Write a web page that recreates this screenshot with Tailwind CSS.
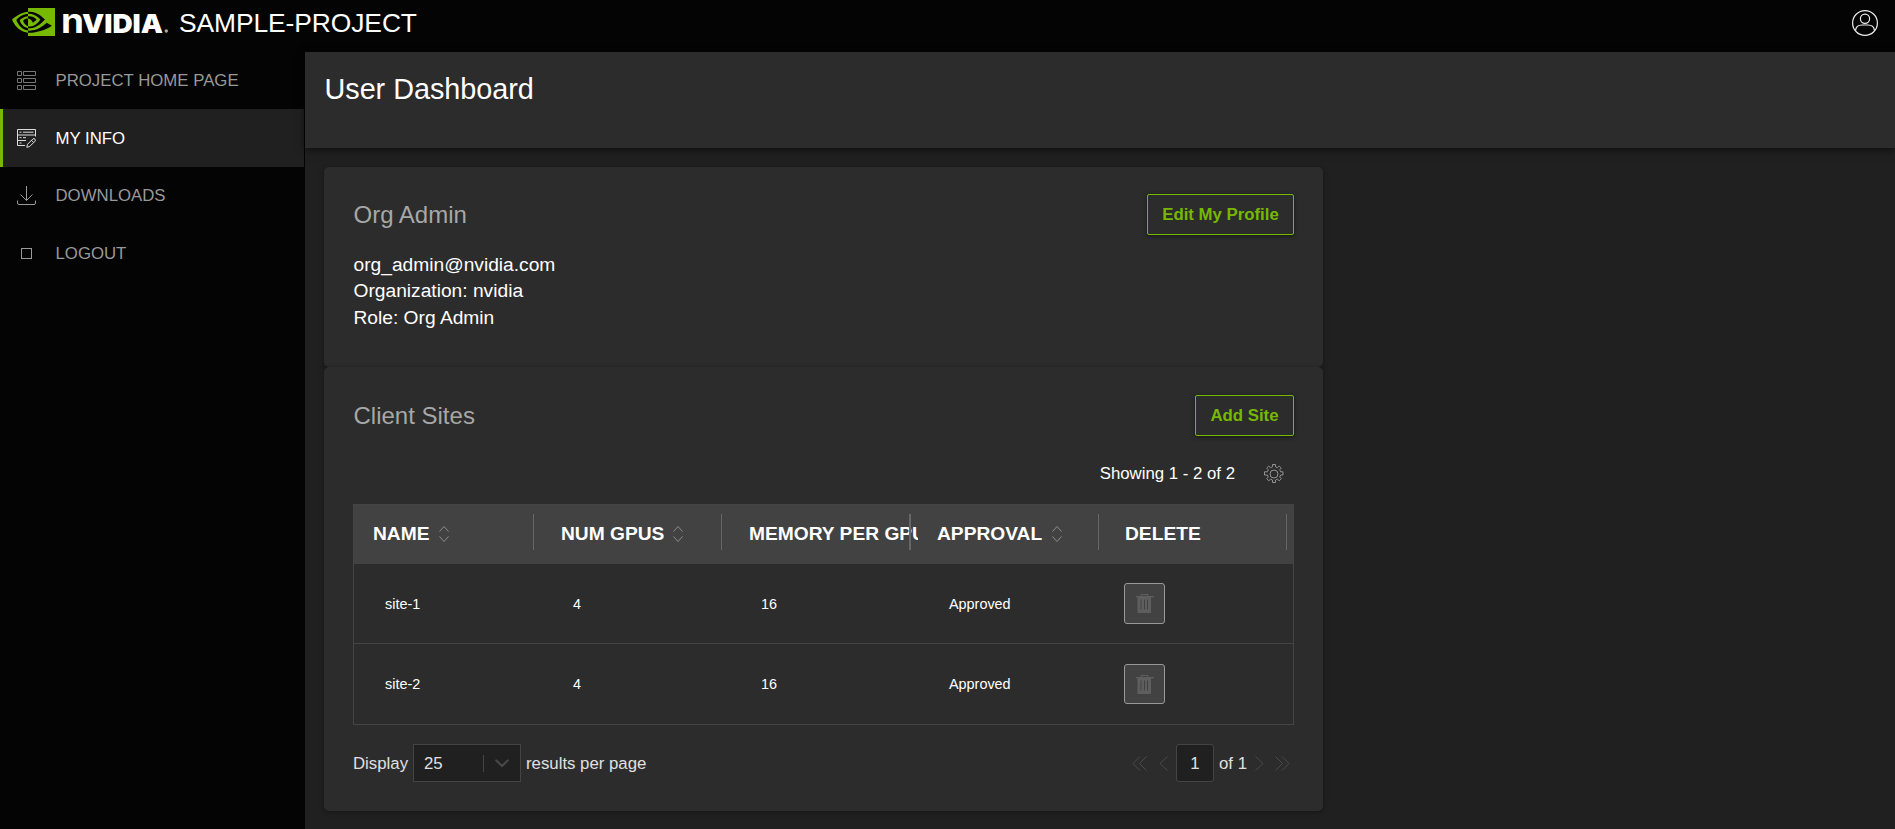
<!DOCTYPE html>
<html lang="en">
<head>
<meta charset="utf-8">
<title>User Dashboard</title>
<script src="https://cdn.jsdelivr.net/npm/@tailwindcss/browser@4"></script>
</head>
<body class="bg-[#202020] text-white font-['Liberation_Sans',Arial,sans-serif] overflow-hidden">
<div class="flex h-[829px] w-full flex-col">
  <header class="flex h-[52px] shrink-0 items-start justify-between bg-[#040404] pl-3 pr-[17px]">
    <div class="flex items-start">
      <svg class="mt-2 h-7 w-[43px]" viewBox="0 4.063 24 15.874" preserveAspectRatio="none">
        <path fill="#76b900" d="M8.948 8.798v-1.43a6.7 6.7 0 0 1 .424-.018c3.922-.124 6.493 3.374 6.493 3.374s-2.774 3.851-5.75 3.851c-.398 0-.787-.062-1.158-.185v-4.346c1.528.185 1.837.857 2.747 2.385l2.04-1.714s-1.492-1.952-4-1.952a6.016 6.016 0 0 0-.796.035m0-4.735v2.138l.424-.027c5.45-.185 9.01 4.47 9.01 4.47s-4.08 4.964-8.33 4.964c-.37 0-.733-.035-1.095-.097v1.325c.3.035.61.062.91.062 3.957 0 6.82-2.023 9.593-4.408.459.371 2.34 1.263 2.73 1.652-2.633 2.208-8.772 3.984-12.253 3.984-.335 0-.653-.018-.971-.053v1.864H24V4.063zm0 10.326v1.131c-3.657-.654-4.673-4.46-4.673-4.46s1.758-1.944 4.673-2.262v1.237H8.94c-1.528-.186-2.73 1.245-2.73 1.245s.68 2.412 2.739 3.11M2.456 10.9s2.164-3.197 6.5-3.533V6.201C4.153 6.59 0 10.653 0 10.653s2.35 6.802 8.948 7.42v-1.237c-4.84-.6-6.492-5.936-6.492-5.936z"/>
      </svg>
      <svg class="ml-px mt-2 h-8 w-[114px] overflow-visible" viewBox="0 0 114 32" fill="#fff" font-family="Inter" font-weight="900">
        <text x="5" y="24.500" font-size="33.500" font-weight="700" textLength="23" lengthAdjust="spacingAndGlyphs">n</text>
        <text x="26" y="24.500" font-size="26" textLength="81" lengthAdjust="spacingAndGlyphs">VIDIA</text>
        <circle cx="110.300" cy="23" r="1.700" fill="#aaa"/>
      </svg>
      <div class="ml-[9px] mt-[3px] text-[26.4px] leading-[40px] tracking-[-0.08px]">SAMPLE-PROJECT</div>
    </div>
    <svg class="mt-[10px] h-[26px] w-[26px]" viewBox="0 0 26 26" fill="none" stroke="#eee" stroke-width="1.200">
      <circle cx="13" cy="13" r="12.400"/><circle cx="13" cy="8.700" r="4.600"/><path d="M3.500 20.800C3.800 16.500 6.500 15 10 15H16C19.500 15 22.200 16.500 22.500 20.800"/>
    </svg>
  </header>
  <div class="flex min-h-0 flex-1">
    <nav class="flex w-[305px] shrink-0 flex-col bg-[#040404] pr-px text-[16.8px] text-[#999]">
      <a class="flex h-[57px] items-center pl-[17px]">
        <svg class="h-[19px] w-[19px]" viewBox="0 0 19 19" fill="none" stroke="#777"><path d="M.5 .5h4v4h-4zM6.500 .5h12v4h-12zM.5 7.500h4v4h-4zM6.500 7.500h12v4h-12zM.5 14.500h4v4h-4zM6.500 14.500h12v4h-12z"/></svg>
        <span class="ml-[19.500px]">PROJECT HOME PAGE</span>
      </a>
      <a class="flex h-[58px] items-center border-l-3 border-[#76b900] bg-[#202020] pl-[14px] text-white">
        <svg class="h-[19px] w-[19px]" viewBox="0 0 19 19" fill="none" stroke="#ddd"><path d="M8 16.500H.5V.5H18.500V7.500M.5 6H18.500M.5 11.500H9M6 3.200H16.500M6 8.700H9M2.500 3.200h2M2.500 8.700h2M2.500 14h2"/><path d="M9.800 18.300 10.500 15.300 16 9.800Q17 9.200 18 10.200 18.800 11.200 18 12.200L12.700 17.500ZM14.500 11.300 16.600 13.400"/></svg>
        <span class="ml-[19.500px] pt-px">MY INFO</span>
      </a>
      <a class="flex h-[57px] items-center pl-[17px]">
        <svg class="h-[19px] w-[19px]" viewBox="0 0 19 19" fill="none" stroke="#999"><path d="M9.500 0V14.500M3.500 8.500 9.500 14.500 15.500 8.500M.5 14.500V17Q.5 18.500 2 18.500H17Q18.500 18.500 18.500 17V14.500"/></svg>
        <span class="ml-[19.500px]">DOWNLOADS</span>
      </a>
      <a class="flex h-[58px] items-center pl-[17px]">
        <svg class="h-[19px] w-[19px]" viewBox="0 0 19 19" fill="none" stroke="#999"><rect x="4.500" y="4.500" width="10" height="10"/></svg>
        <span class="ml-[19.500px] pt-px">LOGOUT</span>
      </a>
    </nav>
    <main class="min-w-0 flex-1">
      <div class="h-24 bg-[#2c2c2c] pl-[19.500px] pt-[20px] text-[28.8px] leading-[34px] tracking-[-0.03px] shadow-[0_2px_8px_rgba(0,0,0,0.6)]">User Dashboard</div>
      <div class="ml-[19px] mt-[19px] w-[999px]">
        <section class="h-[200px] rounded-[5px] bg-[#2c2c2c] px-[29px] pt-[27px] shadow-[0_1px_5px_rgba(0,0,0,0.35)]">
          <div class="flex items-center justify-between">
            <h2 class="pl-[0.5px] text-2xl text-[#a7a7a7]">Org Admin</h2>
            <button class="h-[41px] w-[147px] rounded-[2px] border border-[#76b900] text-[16.8px] font-bold text-[#76b900] shadow-[0_1px_4px_rgba(0,0,0,0.5)]">Edit My Profile</button>
          </div>
          <div class="mt-[17px] pl-[0.5px] text-[19.2px] leading-[26.4px]"><p>org_admin@nvidia.com</p><p>Organization: nvidia</p><p>Role: Org Admin</p></div>
        </section>
        <section class="h-[444px] rounded-[5px] bg-[#2c2c2c] px-[29px] pt-7 shadow-[0_1px_5px_rgba(0,0,0,0.35)]">
          <div class="flex items-center justify-between">
            <h2 class="pl-[0.5px] text-2xl text-[#a7a7a7]">Client Sites</h2>
            <button class="h-[41px] w-[99px] rounded-[2px] border border-[#76b900] text-[16.8px] font-bold text-[#76b900] shadow-[0_1px_4px_rgba(0,0,0,0.5)]">Add Site</button>
          </div>
          <div class="flex h-[68px] items-center justify-end pr-[10px] pt-2 text-[16.8px]">
            <span>Showing 1 - 2 of 2</span>
            <svg class="ml-[29px] h-5 w-5" viewBox="0 0 20 20" fill="none" stroke="#929292"><path d="M8.500.5h3v2.300l2 .9 1.700-1.700 2.100 2.100-1.600 1.700.9 2h2.400v3.200h-2.400l-.9 2 1.600 1.700-2.100 2.100-1.700-1.600-2 .8v2.500h-3v-2.500l-2-.8-1.700 1.600-2.100-2.100 1.600-1.700-.9-2H.5V7.800h2.900l.9-2-1.600-1.700 2.100-2.100 1.700 1.700 2-.9z"/><circle cx="10" cy="10" r="4"/></svg>
          </div>
          <div class="h-[221px] border border-[#444]">
            <div class="flex h-[59px] bg-[#424242] text-[19.2px] font-bold leading-[58px]">
              <div class="relative w-[188px] shrink-0 pl-[19px]"><span>NAME</span><svg class="mb-[2px] ml-[9px] inline h-[18px] w-[10px]" viewBox="0 0 10 18" fill="none" stroke="#8c8c8c"><path d="M.5 6.500 5 1.500 9.500 6.500M.5 11.500 5 16.500 9.500 11.500"/></svg><i class="absolute left-[179px] top-[9px] h-9 w-px bg-[#666]"></i></div>
              <div class="relative w-[188px] shrink-0 pl-[19px]"><span>NUM GPUS</span><svg class="mb-[2px] ml-[9px] inline h-[18px] w-[10px]" viewBox="0 0 10 18" fill="none" stroke="#8c8c8c"><path d="M.5 6.500 5 1.500 9.500 6.500M.5 11.500 5 16.500 9.500 11.500"/></svg><i class="absolute left-[179px] top-[9px] h-9 w-px bg-[#666]"></i></div>
              <div class="relative w-[188px] shrink-0 overflow-hidden whitespace-nowrap pl-[19px]"><span>MEMORY PER GPU</span><i class="absolute left-[179px] top-[9px] h-9 w-[2px] bg-[#666]"></i></div>
              <div class="relative w-[188px] shrink-0 pl-[19px]"><span>APPROVAL</span><svg class="mb-[2px] ml-[10px] inline h-[18px] w-[10px]" viewBox="0 0 10 18" fill="none" stroke="#8c8c8c"><path d="M.5 6.500 5 1.500 9.500 6.500M.5 11.500 5 16.500 9.500 11.500"/></svg><i class="absolute left-[180px] top-[9px] h-9 w-px bg-[#666]"></i></div>
              <div class="relative w-[187px] shrink-0 pl-[19px]"><span>DELETE</span><i class="absolute left-[180px] top-[9px] h-9 w-px bg-[#666]"></i></div>
            </div>
            <div class="flex h-20 items-center border-b border-[#444] pl-[31px] text-[14.4px]">
              <div class="w-[188px] pt-[2px]">site-1</div><div class="w-[188px] pt-[2px]">4</div><div class="w-[188px] pt-[2px]">16</div><div class="w-[175px] pt-[2px]">Approved</div>
              <div class="flex h-[41px] w-[41px] items-center justify-center rounded-[3px] border border-[#999] bg-[#424242]"><svg class="h-[19px] w-[18px]" viewBox="0 0 18 19"><path fill="#5e5e5e" d="M0 2h18v1.200h-3V19H1.500V3.200H0z"/><path d="M5 2V.5h7V2" fill="none" stroke="#5e5e5e"/><path d="M5 5.500V15.500M8.500 5.500V15.500M11.500 5.500V15.500" stroke="#424242"/></svg></div>
            </div>
            <div class="flex h-20 items-center pl-[31px] text-[14.4px]">
              <div class="w-[188px] pt-[2px]">site-2</div><div class="w-[188px] pt-[2px]">4</div><div class="w-[188px] pt-[2px]">16</div><div class="w-[175px] pt-[2px]">Approved</div>
              <div class="flex h-10 w-[41px] items-center justify-center rounded-[3px] border border-[#999] bg-[#424242]"><svg class="h-[19px] w-[18px]" viewBox="0 0 18 19"><path fill="#5e5e5e" d="M0 2h18v1.200h-3V19H1.500V3.200H0z"/><path d="M5 2V.5h7V2" fill="none" stroke="#5e5e5e"/><path d="M5 5.500V15.500M8.500 5.500V15.500M11.500 5.500V15.500" stroke="#424242"/></svg></div>
            </div>
          </div>
          <div class="mt-[19px] flex h-[38px] items-center text-[16.8px] text-[#e0e0e0]">
            <span class="pt-px">Display</span>
            <div class="ml-[5px] flex h-[38px] w-[108px] items-center border border-[#444] bg-[#202020] pl-[10px]"><span class="w-[59px] pt-px">25</span><i class="h-[17px] w-px bg-[#444]"></i><svg class="ml-[11px] h-[9px] w-[14px]" viewBox="0 0 14 9" fill="none" stroke="#484848" stroke-width="2.200" stroke-linecap="round"><path d="M1.300 1.500 7 7 12.700 1.500"/></svg></div>
            <span class="ml-[5px] pt-px">results per page</span>
            <div class="ml-auto flex items-center pr-1">
              <svg class="h-[15px] w-[15px]" viewBox="0 0 15 15" fill="none" stroke="#4a4a4a"><path d="M8 .5 1 7.500 8 14.500M14.500 .5 7.500 7.500 14.500 14.500"/></svg>
              <svg class="ml-3 h-[15px] w-[9px]" viewBox="0 0 9 15" fill="none" stroke="#4a4a4a"><path d="M8.500 .5 1 7.500 8.500 14.500"/></svg>
              <span class="ml-2 flex h-[38px] w-[38px] items-center justify-center rounded-[3px] border border-[#444] bg-[#202020] pt-px">1</span>
              <span class="ml-[5px] pt-px">of 1</span>
              <svg class="ml-2 h-[15px] w-[9px]" viewBox="0 0 9 15" fill="none" stroke="#4a4a4a"><path d="M.5 .5 8 7.500 .5 14.500"/></svg>
              <svg class="ml-[11px] h-[15px] w-[15px]" viewBox="0 0 15 15" fill="none" stroke="#4a4a4a"><path d="M.5 .5 7.500 7.500 .5 14.500M7 .5 14 7.500 7 14.500"/></svg>
            </div>
          </div>
        </section>
      </div>
    </main>
  </div>
</div>
</body>
</html>
